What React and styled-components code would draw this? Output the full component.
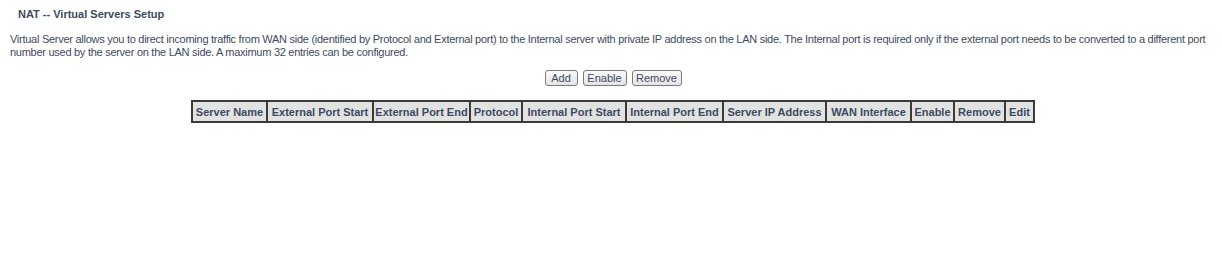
import React from 'react';
import styled, { createGlobalStyle } from 'styled-components';

const GlobalStyle = createGlobalStyle`
  body {
    margin: 0;
    background: #ffffff;
    font-family: "Liberation Sans", Arial, sans-serif;
    font-size: 11px;
    color: #3d4a5e;
  }
`;

const Page = styled.div`
  padding: 8px 10px 0 10px;
`;

const Title = styled.div`
  font-weight: bold;
  padding-left: 8px;
  line-height: 13px;
`;

const Intro = styled.p`
  margin: 12px 0 0 0;
  line-height: 13px;
  white-space: nowrap;
  letter-spacing: -0.27px;
`;

const ButtonRow = styled.div`
  display: flex;
  justify-content: center;
  gap: 5px;
  margin-top: 11px;
  padding-left: 4px;
`;

const Button = styled.button`
  width: ${(p) => p.$w}px;
  height: 16px;
  padding: 0;
  font-family: "Liberation Sans", Arial, sans-serif;
  font-size: 11px;
  color: #3d4a5e;
  background: linear-gradient(#fbfbfb, #e4e4e4);
  border: 1px solid #7a7a7a;
  border-radius: 3px;
  line-height: 14px;
`;

const TableWrap = styled.div`
  display: flex;
  justify-content: center;
  margin-top: 14px;
  padding-left: 4px;
`;

const Table = styled.table`
  border-collapse: collapse;
  table-layout: fixed;
  border: 2px solid #3a3a3a;
`;

const HeadCell = styled.th`
  background: #e2e2e2;
  border: 2px solid #3a3a3a;
  height: 19px;
  padding: 0;
  font-weight: bold;
  font-size: 11px;
  white-space: nowrap;
  text-align: center;
  color: #3d4a5e;
`;

const buttons = [
  { label: 'Add', width: 33 },
  { label: 'Enable', width: 44 },
  { label: 'Remove', width: 50 },
];

const columns = [
  { title: 'Server Name', width: 75 },
  { title: 'External Port Start', width: 106 },
  { title: 'External Port End', width: 97 },
  { title: 'Protocol', width: 52 },
  { title: 'Internal Port Start', width: 104 },
  { title: 'Internal Port End', width: 97 },
  { title: 'Server IP Address', width: 103 },
  { title: 'WAN Interface', width: 85 },
  { title: 'Enable', width: 43 },
  { title: 'Remove', width: 51 },
  { title: 'Edit', width: 29 },
];

export default function App() {
  return (
    <Page>
      <GlobalStyle />
      <Title>NAT -- Virtual Servers Setup</Title>
      <Intro>
        Virtual Server allows you to direct incoming traffic from WAN side (identified by Protocol and External port) to the Internal server with private IP address on the LAN side. The Internal port is required only if the external port needs to be converted to a different port
        <br />
        number used by the server on the LAN side. A maximum 32 entries can be configured.
      </Intro>
      <ButtonRow>
        {buttons.map((b) => (
          <Button key={b.label} $w={b.width}>{b.label}</Button>
        ))}
      </ButtonRow>
      <TableWrap>
        <Table>
          <colgroup>
            {columns.map((c) => (
              <col key={c.title} style={{ width: c.width }} />
            ))}
          </colgroup>
          <thead>
            <tr>
              {columns.map((c) => (
                <HeadCell key={c.title}>{c.title}</HeadCell>
              ))}
            </tr>
          </thead>
        </Table>
      </TableWrap>
    </Page>
  );
}
